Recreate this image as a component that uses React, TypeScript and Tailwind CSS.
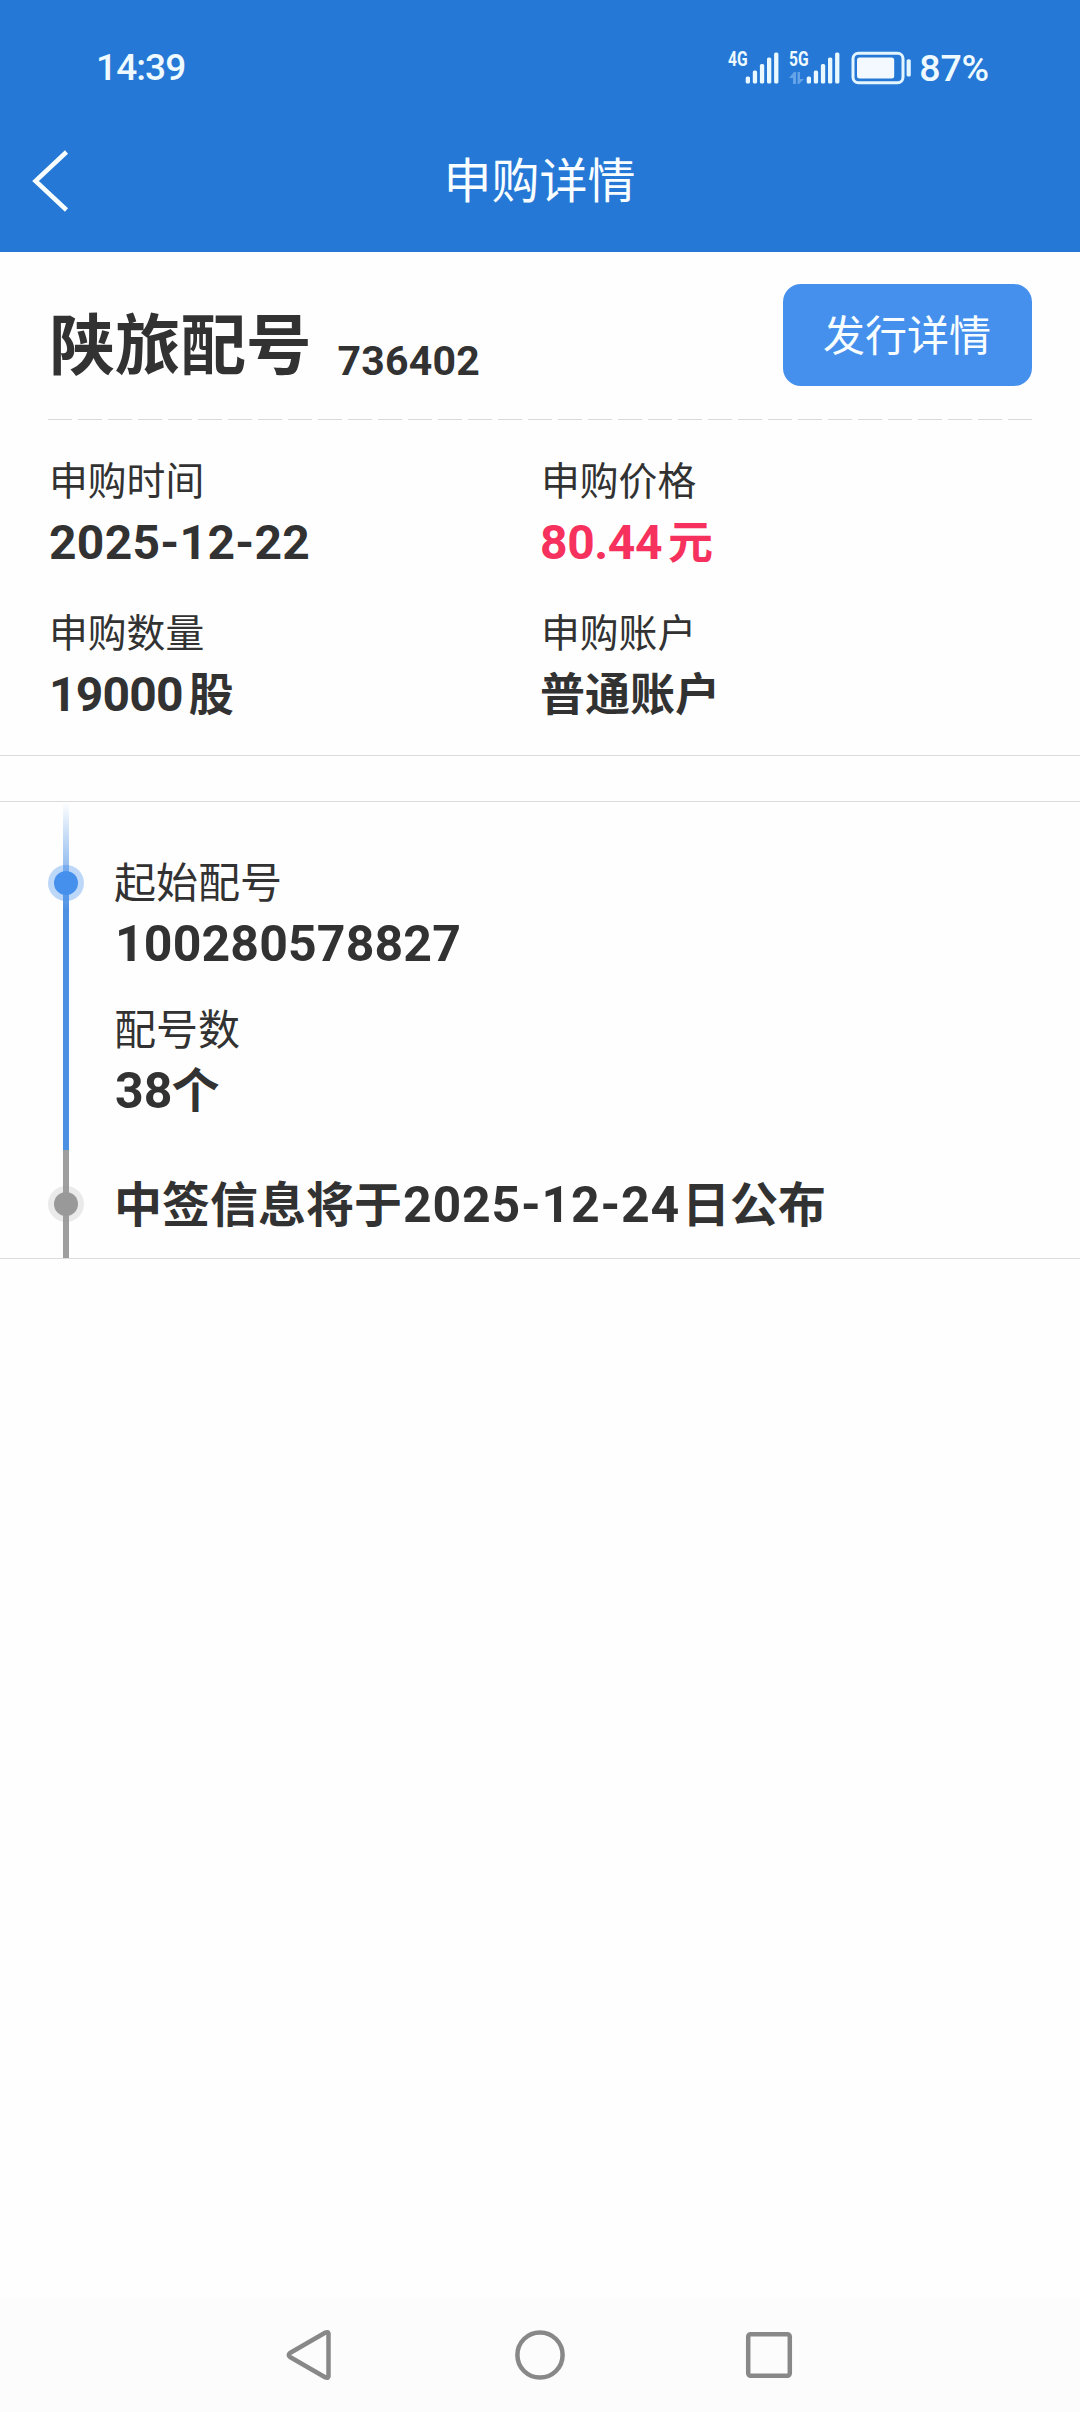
import React from "react";

interface FieldProps {
    label: string;
    children: React.ReactNode;
    accent?: boolean;
}

const SIGNAL_HEIGHTS = [7, 13, 19.5, 26, 31];

function SignalBars() {
    return (
        <svg width="34" height="32" viewBox="0 0 34 32" fill="#eaf9ff">
            {SIGNAL_HEIGHTS.map((h, i) => (
                <rect key={i} x={0.7 + i * 7.1} y={31.5 - h} width="4.3" height={h} rx="1.6" />
            ))}
        </svg>
    );
}

function Battery() {
    return (
        <svg width="61" height="34" viewBox="0 0 61 34" fill="none">
            <rect x="2" y="2.2" width="50" height="29.6" rx="5.5" stroke="#e3f6ff" strokeWidth="3" />
            <rect x="6" y="6.5" width="37.2" height="21" rx="2.5" fill="#f4f8ff" />
            <rect x="55.6" y="8.2" width="4.2" height="17.4" rx="1.6" fill="#e3f6ff" />
        </svg>
    );
}

function StatusBar() {
    return (
        <div className="flex h-[110px] items-start justify-between pt-[50px] pr-[91px] pl-[96px] text-[#eefaff]">
            <span className="text-[37px] leading-[36px] font-medium tracking-[-0.9px]">14:39</span>
            <div className="flex h-9 items-center">
                <div className="flex h-8 w-[61px] items-start">
                    <span className="w-[17px] origin-left scale-x-[0.78] text-[20px] leading-[15px] font-bold whitespace-nowrap">4G</span>
                    <SignalBars />
                </div>
                <div className="flex h-8 w-[62px] items-start">
                    <div className="flex w-[17px] flex-col">
                        <span className="origin-left scale-x-[0.78] text-[20px] leading-[15px] font-bold whitespace-nowrap">5G</span>
                        {/* data up / down */}
                        <svg className="mt-[5px]" width="17" height="12" viewBox="0 0 17 12" fill="#64a3e8">
                            <path d="M5 0h2v12H4V6H0zM8.500 0h2.500v7h4L10 12H8.500z" />
                        </svg>
                    </div>
                    <SignalBars />
                </div>
                <Battery />
                <span className="ml-[7px] text-[37.500px] leading-[36px] font-medium tracking-[-0.2px]">87%</span>
            </div>
        </div>
    );
}

function Header() {
    return (
        <header className="h-[252px] bg-[#2578d5]">
            <StatusBar />
            <div className="grid h-[142px] grid-cols-[120px_1fr_120px] items-center">
                <svg className="ml-[31px]" width="40" height="64" viewBox="0 0 40 64" fill="none">
                    <path d="M35.500 3L4.500 32L35.500 61" stroke="#f8fdff" strokeWidth="4.5" />
                </svg>
                <h1 className="pt-0.5 pr-px text-center text-5xl leading-[60px] text-[#f8fdff]">申购详情</h1>
            </div>
        </header>
    );
}

function Field({ label, children, accent }: FieldProps) {
    return (
        <div>
            <div className="pl-px text-[38.800px] leading-[60px]">{label}</div>
            <div
                className={
                    accent
                        ? "mt-px text-5xl leading-[60px] font-bold tracking-[-0.4px] text-[#f6315d]"
                        : "mt-px pl-px text-5xl leading-[60px] font-bold"
                }
            >
                {children}
            </div>
        </div>
    );
}

function Summary() {
    return (
        <section className="h-[504px] border-b border-[#dcdcdc] px-12">
            <div className="flex h-[167px] items-start justify-between">
                <div className="flex items-end pt-[62px] pl-[1.500px]">
                    <h2 className="text-[65.500px] leading-[66px] font-bold">陕旅配号</h2>
                    <span className="ml-[26px] text-[41px] leading-[37px] font-bold tracking-[0.2px]">736402</span>
                </div>
                <button className="mt-8 h-[102px] w-[249px] rounded-[18px] bg-[#4690ed] pt-[3px] pr-px text-[42px] leading-[60px] text-[#f8fdff]">
                    发行详情
                </button>
            </div>
            <div className="h-px bg-[repeating-linear-gradient(to_right,#d9d9d9_0_24px,transparent_24px_30px)]" />
            <div className="grid grid-cols-2 gap-y-[30px] pt-8">
                <Field label="申购时间">
                    <span className="tracking-[0.3px]">2025-12-22</span>
                </Field>
                <Field label="申购价格" accent>
                    80.44<span className="ml-1.5 text-[45px]">元</span>
                </Field>
                <Field label="申购数量">
                    <span className="tracking-[-0.8px]">19000</span>
                    <span className="ml-1.5 text-[45px]">股</span>
                </Field>
                <Field label="申购账户">
                    <span className="-ml-px text-[45px]">普通账户</span>
                </Field>
            </div>
        </section>
    );
}

function Timeline() {
    return (
        <section className="mt-[45px] border-y border-[#dcdcdc]">
            <div className="flex h-[348px] gap-[30px] pl-12">
                <div className="relative w-9">
                    <div className="mx-auto h-full w-1.5 bg-[linear-gradient(to_bottom,#ffffff_0,#4c90e4_108px)]" />
                    <div className="absolute top-[63px] left-0 flex size-9 items-center justify-center rounded-full bg-[#4690ed]/35">
                        <div className="size-6 rounded-full bg-[#4690ed]" />
                    </div>
                </div>
                <div className="pt-[52px]">
                    <div className="text-[42px] leading-[60px]">起始配号</div>
                    <div className="pl-px text-[50px] leading-[60px] font-bold tracking-[0.15px]">100280578827</div>
                    <div className="mt-[27px] text-[42px] leading-[60px]">配号数</div>
                    <div className="pl-px text-[50px] leading-[60px] font-bold">
                        38<span className="-ml-px text-5xl">个</span>
                    </div>
                </div>
            </div>
            <div className="flex h-[108px] items-center gap-[30px] pl-12">
                <div className="relative h-full w-9">
                    <div className="mx-auto h-full w-1.5 bg-[#9e9e9e]" />
                    <div className="absolute top-9 left-0 flex size-9 items-center justify-center rounded-full bg-[#999999]/20">
                        <div className="size-6 rounded-full bg-[#999999]" />
                    </div>
                </div>
                <div className="pt-0.5 text-[50px] leading-[60px] font-bold">
                    <span className="text-5xl">中签信息将于</span>
                    <span className="mr-0.5 ml-px tracking-[0.8px]">2025-12-24</span>
                    <span className="text-5xl">日公布</span>
                </div>
            </div>
        </section>
    );
}

function NavBar() {
    return (
        <nav className="mt-auto flex h-[114px] items-center justify-center gap-[177px] bg-[#fcfcfc]">
            <svg width="52" height="52" viewBox="0 0 52 52" fill="none" stroke="#888888" strokeWidth="4.5">
                <path d="M43.500 4.500V47.500Q43 49.500 40.500 48.500L5 28Q2.500 26 5 24L40.500 3.500Q43 2.500 43.500 4.500Z" strokeLinejoin="round" />
            </svg>
            <svg width="52" height="52" viewBox="0 0 52 52" fill="none" stroke="#888888" strokeWidth="4.5">
                <circle cx="26" cy="26" r="22.600" />
            </svg>
            <svg width="52" height="52" viewBox="0 0 52 52" fill="none" stroke="#888888" strokeWidth="4.5">
                <rect x="5.200" y="5.200" width="41.600" height="41.600" rx="2.500" />
            </svg>
        </nav>
    );
}

export default function App() {
    return (
        <div className="flex h-[2412px] w-[1080px] flex-col overflow-hidden bg-[#fefefe] font-[Roboto,'Noto_Sans_CJK_SC',sans-serif] text-[#323232]">
            <Header />
            <Summary />
            <Timeline />
            <NavBar />
        </div>
    );
}
